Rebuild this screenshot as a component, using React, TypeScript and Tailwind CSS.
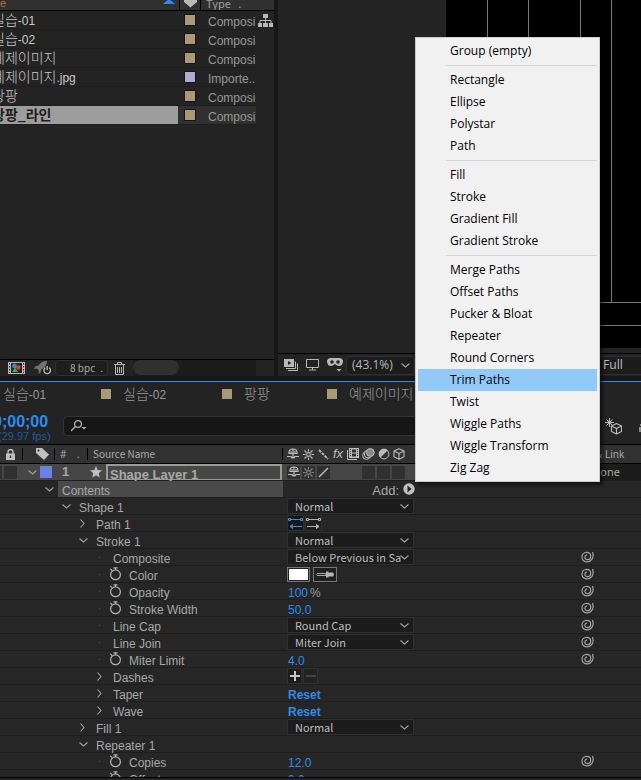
import React from "react";

const TAN = "bg-[#ab9877]";

const project = [
  { name: "실습", suffix: "-01", type: "Composi", tag: TAN },
  { name: "실습", suffix: "-02", type: "Composi", tag: TAN },
  { name: "예제이미지", suffix: "", type: "Composi", tag: TAN },
  { name: "예제이미지", suffix: ".jpg", type: "Importe..", tag: "bg-[#aeaad0]" },
  { name: "팡팡", suffix: "", type: "Composi", tag: TAN },
  { name: "팡팡_라인", suffix: "", type: "Composi", tag: TAN, selected: true },
];

const menu = [
  ["Group (empty)"],
  ["Rectangle", "Ellipse", "Polystar", "Path"],
  ["Fill", "Stroke", "Gradient Fill", "Gradient Stroke"],
  [
    "Merge Paths",
    "Offset Paths",
    "Pucker & Bloat",
    "Repeater",
    "Round Corners",
    "Trim Paths",
    "Twist",
    "Wiggle Paths",
    "Wiggle Transform",
    "Zig Zag",
  ],
];

function ItemName({ name, suffix, bold = false }: { name: string; suffix: string; bold?: boolean }) {
  return (
    <span
      className={
        "whitespace-nowrap font-['Noto_Sans_CJK_KR',sans-serif] text-[14px] leading-[18px] " +
        (bold ? "font-bold" : "font-light")
      }
    >
      {name}
      <span className="font-['Liberation_Sans',sans-serif] text-[12px] font-normal">{suffix}</span>
    </span>
  );
}

function Chevron({ open = true }: { open?: boolean }) {
  return (
    <svg width="9" height="9" viewBox="0 0 9 9" fill="none" stroke="#a0a0a0" strokeWidth="1.1" className="shrink-0">
      <path d={open ? "M.5 2.500 4.500 6 8.500 2.500" : "M1.500 .5 5 4.500 1.500 8.500"} />
    </svg>
  );
}

function Stopwatch() {
  return (
    <svg width="14" height="14" viewBox="0 0 14 14" fill="none" stroke="#b4b4b4" strokeWidth="1.2" className="shrink-0">
      <circle cx="6.500" cy="7.800" r="4.900" />
      <path d="M4.500 .8h4M6.500 .8v2M1.300 1.800l1.800 1.800" />
    </svg>
  );
}

function Spiral() {
  return (
    <svg width="14" height="12" viewBox="0 0 14 12" fill="none" stroke="#a4a4a4" strokeWidth="1.2">
      <path d="M11.500 1c1 3 .8 5.600-.8 7.600-1.300 1.600-3 2.400-5 2.300C2.900 10.700 1 8.800 1 6.100 1 3.300 3 1.300 5.500 1.300s4.200 1.700 4.200 4c0 2-1.400 3.300-3.200 3.300S3.700 7.500 3.900 6c.2-1.200 1.100-1.900 2.100-1.800" />
    </svg>
  );
}

function ShyIcon() {
  return (
    <svg width="12" height="12" viewBox="0 0 12 12" fill="none" stroke="#bdbdbd" strokeWidth="1.2">
      <path d="M2 6V4.500C2 2.300 3.700 1 6 1s4 1.300 4 3.500V6M0 8.500h4c.6 2 3.400 2 4 0h4M2 5.500h8M6 1v9M4 3v2.500M8 3v2.500" />
    </svg>
  );
}

function SunIcon({ dim = false }: { dim?: boolean }) {
  return (
    <svg width="11" height="11" viewBox="0 0 11 11" fill="none" stroke={dim ? "#858585" : "#bdbdbd"} strokeWidth="1.1">
      <circle cx="5.500" cy="5.500" r="1.900" />
      <path d="M5.500 0v2.500M5.500 8.500V11M0 5.500h2.500M8.500 5.500H11M1.500 1.500l2 2M7.500 7.500l2 2M9.500 1.500l-2 2M3.500 7.500l-2 2" />
    </svg>
  );
}

function CubeIcon() {
  return (
    <svg width="12" height="12" viewBox="0 0 12 12" fill="none" stroke="#b8b8b8" strokeWidth="1.1" strokeLinejoin="round">
      <path d="M6 .7 11 3v5.800L6 11.300 1 8.800V3zM1 3l5 2.500L11 3M6 5.500v5.800" />
    </svg>
  );
}

function Select({ label, value }: { label: string; value: string }) {
  return (
    <span className="relative flex h-4 w-[127px] items-center border border-[#303030] bg-[#1c1c1c]">
      <select
        aria-label={label}
        className="h-full w-[116px] appearance-none overflow-hidden bg-transparent pl-[7px] font-['Noto_Sans_CJK_KR',sans-serif] text-[11px] leading-[14px] text-[#bcbcbc]"
      >
        <option>{value}</option>
      </select>
      <span className="pointer-events-none absolute right-1 top-[3px]">
        <Chevron />
      </span>
    </span>
  );
}

function Value({ children, unit, bold = false }: { children: string; unit?: string; bold?: boolean }) {
  return (
    <button className={"pl-px pt-1 text-[12px] leading-[13px] text-[#2d8ceb] " + (bold ? "font-bold" : "")}>
      {children}
      {unit && <span className="pl-0.5 text-[#999]">{unit}</span>}
    </button>
  );
}

function Swatch() {
  return (
    <span className="flex gap-[3px]">
      <button aria-label="Stroke color" className="h-[15px] w-[23px] border border-[#777] bg-white p-px ring-1 ring-inset ring-[#222]" />
      <button aria-label="Pick color" className="flex h-[15px] w-6 items-center justify-center border border-[#777] bg-[#1f1f1f]">
        <svg width="18" height="7" viewBox="0 0 18 7">
          <path d="M1 2.500h9v2H1L0 3.500z" fill="none" stroke="#aaa" />
          <path d="M10 .5h2.500v1H17l1 2-1 2h-4.500v1H10z" fill="#b4b4b4" />
        </svg>
      </button>
    </span>
  );
}

function PathDirection() {
  return (
    <span className="flex gap-px">
      {[true, false].map((active) => (
        <button
          key={String(active)}
          aria-label={active ? "Reverse path direction off" : "Reverse path direction on"}
          className={"flex h-4 w-[17px] items-center justify-center border border-[#303030] " + (active ? "bg-[#161616]" : "bg-[#1e1e1e]")}
        >
          <svg width="15" height="12" viewBox="0 0 15 12" fill="none" stroke={active ? "#2d8ceb" : "#b4b4b4"} className="shrink-0">
            <path d="M.5 1.500h2v2h-2zM12.500 1.500h2v2h-2zM3 2.500h9" />
            {active ? (
              <path d="M14 9.500H3M4.500 7.500v4L2 9.500z" fill="#2d8ceb" />
            ) : (
              <path d="M1 9.500h11M10.500 7.500v4L13 9.500z" fill="#b4b4b4" />
            )}
          </svg>
        </button>
      ))}
    </span>
  );
}

function DashButtons() {
  return (
    <span className="flex gap-px">
      <button aria-label="Add dash" className="flex h-4 w-[15px] items-center justify-center border border-[#303030] bg-[#1c1c1c]">
        <svg width="10" height="10" viewBox="0 0 10 10" stroke="#c8c8c8" strokeWidth="2">
          <path d="M0 5h10M5 0v10" />
        </svg>
      </button>
      <button aria-label="Remove dash" className="flex h-4 w-[15px] items-center justify-center border border-[#303030] bg-[#222]">
        <svg width="10" height="10" viewBox="0 0 10 10" stroke="#444" strokeWidth="2">
          <path d="M0 5h10" />
        </svg>
      </button>
    </span>
  );
}

type Row = {
  label: string;
  pad: string;
  arrow?: "open" | "closed";
  watch?: boolean;
  dot?: boolean;
  link?: boolean;
  control?: React.ReactNode;
};

const reset = <Value bold>Reset</Value>;

const rows: Row[] = [
  { label: "Shape 1", pad: "pl-[62px]", arrow: "open", control: <Select label="Shape 1 blend mode" value="Normal" /> },
  { label: "Path 1", pad: "pl-[79px]", arrow: "closed", control: <PathDirection /> },
  { label: "Stroke 1", pad: "pl-[79px]", arrow: "open", control: <Select label="Stroke 1 blend mode" value="Normal" /> },
  { label: "Composite", pad: "pl-[96px]", dot: true, link: true, control: <Select label="Composite" value="Below Previous in Sa" /> },
  { label: "Color", pad: "pl-[96px]", dot: true, watch: true, link: true, control: <Swatch /> },
  { label: "Opacity", pad: "pl-[96px]", dot: true, watch: true, link: true, control: <Value unit="%">100</Value> },
  { label: "Stroke Width", pad: "pl-[96px]", dot: true, watch: true, link: true, control: <Value>50.0</Value> },
  { label: "Line Cap", pad: "pl-[96px]", dot: true, link: true, control: <Select label="Line Cap" value="Round Cap" /> },
  { label: "Line Join", pad: "pl-[96px]", dot: true, link: true, control: <Select label="Line Join" value="Miter Join" /> },
  { label: "Miter Limit", pad: "pl-[96px]", dot: true, watch: true, link: true, control: <Value>4.0</Value> },
  { label: "Dashes", pad: "pl-[96px]", arrow: "closed", control: <DashButtons /> },
  { label: "Taper", pad: "pl-[96px]", arrow: "closed", control: reset },
  { label: "Wave", pad: "pl-[96px]", arrow: "closed", control: reset },
  { label: "Fill 1", pad: "pl-[79px]", arrow: "closed", control: <Select label="Fill 1 blend mode" value="Normal" /> },
  { label: "Repeater 1", pad: "pl-[79px]", arrow: "open" },
  { label: "Copies", pad: "pl-[96px]", dot: true, watch: true, link: true, control: <Value>12.0</Value> },
  { label: "Offset", pad: "pl-[96px]", dot: true, watch: true, control: <Value>0.0</Value> },
];

function PropertyRow({ row }: { row: Row }) {
  return (
    <div className="flex h-[17px] shrink-0 items-center border-b border-[#1e1e1e]">
      <div className={"flex w-[287px] shrink-0 items-center " + row.pad}>
        <span className="flex w-[17px] shrink-0 items-center">
          {row.arrow && <Chevron open={row.arrow === "open"} />}
          {row.dot && <span className="ml-[3px] size-px bg-[#555]" />}
        </span>
        {row.watch && (
          <button aria-label={"Animate " + row.label} className="-ml-1 w-5">
            <Stopwatch />
          </button>
        )}
        <span className="pt-1 text-[12px] leading-[13px]">{row.label}</span>
      </div>
      {row.control}
      {row.link && (
        <button aria-label={"Pick whip for " + row.label} className="ml-auto mr-[46px]">
          <Spiral />
        </button>
      )}
    </div>
  );
}

function ProjectPanel() {
  return (
    <section className="flex w-[274px] shrink-0 flex-col bg-[#232323]">
      <div className="flex h-[11px] shrink-0 items-end overflow-hidden border-b border-black bg-[#303030] text-[11px]">
        <span className="w-[162px] shrink-0 text-[#a8763e]">
          <span className="block leading-[13px]">e</span>
        </span>
        <svg width="14" height="10" viewBox="0 0 14 10" className="shrink-0">
          <path d="M1 4 7-1l6 5z" fill="#2d8ceb" />
        </svg>
        <span className="ml-[3px] h-full w-px bg-black" />
        <svg width="20" height="10" viewBox="0 0 20 10" className="shrink-0">
          <path d="M4-1h13v3l-6.500 5.500L4 2z" fill="#bababa" />
        </svg>
        <span className="h-full w-px bg-black" />
        <span className="pl-[5px] font-['Noto_Sans_CJK_KR',sans-serif] leading-[14px] text-[#a0a0a0]">Type&nbsp;&nbsp;&nbsp;.</span>
      </div>
      <div className="flex flex-1">
        <ul className="w-64 shrink-0">
          {project.map((p) => (
            <li key={p.name + p.suffix} className="flex h-[19px] border-b border-[#1e1e1e]">
              <span
                className={
                  "flex w-[178px] shrink-0 items-center overflow-hidden " +
                  (p.selected ? "bg-[#9d9d9d] text-[#1c1c1c]" : "text-[#c8c8c8]")
                }
              >
                <span className="-ml-2">
                  <ItemName name={p.name} suffix={p.suffix} bold={p.selected} />
                </span>
              </span>
              <span className={"flex flex-1 items-center overflow-hidden " + (p.selected ? "bg-[#303030]" : "")}>
                <span className={"ml-[7px] size-[10px] shrink-0 ring-1 ring-[#151515] " + p.tag} />
                <span className="ml-[13px] pt-[5px] text-[12px] leading-[13px] text-[#989898]">{p.type}</span>
              </span>
            </li>
          ))}
        </ul>
        <svg width="15" height="14" viewBox="0 0 15 14" fill="#b8b8b8" className="ml-0.5 mt-[3px]">
          <path d="M5 0h5v4H5zM0 9h4v4H0zM5 9h5v4H5zM11 9h4v4h-4z" />
          <path d="M7.500 4v5M2 9V6.500h11V9" fill="none" stroke="#b8b8b8" />
        </svg>
      </div>
      <div className="flex h-[17px] items-center border-t border-black">
        <button aria-label="Interpret footage" className="ml-2">
          <svg width="17" height="12" viewBox="0 0 17 12">
            <path d="M0 0h17v12H0z" fill="#b8b8b8" />
            <path d="M3 1h11v10H3z" fill="#222" />
            <path d="M1.500 1v10M15.500 1v10" stroke="#222" strokeDasharray="1.500 1.500" />
            <circle cx="6.500" cy="4" r="2.400" fill="#2d8ceb" />
            <path d="M8.500 3.500h4v4h-4z" fill="#e23a31" />
            <path d="m7 5.500 3 4.500H4z" fill="#3bb54a" />
          </svg>
        </button>
        <button aria-label="Project settings" className="ml-[9px]">
          <svg width="18" height="14" viewBox="0 0 18 14">
            <path d="M13 0c-4 0-7 2-8.500 4.500L1 5.500 0 8l3-.5L5 10l-.5 3 2-1.500.8-3C10.500 7 13 4 13 0z" fill="#727272" />
            <path d="M11.200 6.800a3.300 3.300 0 1 0 4 0M13.200 5v4" fill="none" stroke="#c0c0c0" strokeWidth="1.300" />
          </svg>
        </button>
        <button className="ml-[3px] flex h-4 w-[53px] shrink-0 items-center justify-between rounded-sm border border-[#303030] bg-[#1e1e1e] pl-3.5 pr-1 font-['Noto_Sans_CJK_KR',sans-serif] text-[10px] leading-[14px] text-[#aaa]">
          <span>8 bpc</span>
          <span>.</span>
        </button>
        <button aria-label="Delete" className="ml-1.5 mr-2">
          <svg width="11" height="13" viewBox="0 0 11 13" fill="none" stroke="#b8b8b8">
            <path d="M0 2.500h11M3.500 2V.5h4V2M1.500 3v9.500h8V3M3.500 5v6M5.500 5v6M7.500 5v6" />
          </svg>
        </button>
        <span className="flex h-4 w-[123px] bg-[#1c1c1c]">
          <span className="h-[15px] w-[46px] rounded-full bg-[#303030]" />
        </span>
      </div>
    </section>
  );
}

function Viewer() {
  return (
    <section className="flex min-w-0 flex-1 flex-col bg-[#232323]">
      <div className="ml-[168px] min-h-0 flex-1 overflow-hidden bg-black">
        <svg width="100%" height="348" className="block" stroke="#777">
          <path d="M41.500 0v302M82.500 0v302M134.500 0v302M165.500 0v302" />
          <path d="M0 302.500h400M0 325.500h400" />
        </svg>
      </div>
      <div className="flex h-7 shrink-0 items-center pt-[5px] font-['Noto_Sans',sans-serif] text-[12px] text-[#b8b8b8]">
        <div className="flex h-full flex-1 items-center border-t border-black">
          <button aria-label="Always preview" className="ml-1.5">
            <svg width="14" height="12" viewBox="0 0 14 12">
              <path d="M0 0h10v8H0z" fill="#b8b8b8" />
              <path d="m4 2 3.500 2L4 6z" fill="#222" />
              <path d="M11.500 2.500v7H2M13.500 4.500v7H4" fill="none" stroke="#b8b8b8" />
            </svg>
          </button>
          <button aria-label="Primary viewer" className="ml-2">
            <svg width="13" height="12" viewBox="0 0 13 12" fill="none" stroke="#b8b8b8">
              <path d="M.5.500h12v8H.5zM6.500 8.500v2.500M3 11h7" />
            </svg>
          </button>
          <button aria-label="VR view" className="ml-2">
            <svg width="16" height="14" viewBox="0 0 16 14" fill="#b8b8b8">
              <path fillRule="evenodd" d="M0 2.500Q1 0 3 0h10q2 0 3 2.500v1q-.5 4.500-4 4.500-2 0-4-2-2 2-4 2Q.5 8 0 3.500zM5 2.200a1.800 1.800 0 1 0 0 3.600 1.800 1.800 0 0 0 0-3.600zm6 0a1.800 1.800 0 1 0 0 3.600 1.800 1.800 0 0 0 0-3.600zM9.500 11h5L12 13.500z" />
            </svg>
          </button>
          <button className="ml-[3px] flex h-[19px] w-[69px] items-center justify-between rounded-sm border border-[#303030] bg-[#1c1c1c] pl-[5px] pr-1 font-['Open_Sans',sans-serif] leading-4">
            (43.1%) <Chevron />
          </button>
          <button className="ml-auto flex h-[19px] w-11 items-center border-y border-[#303030] bg-[#1c1c1c] pl-1.5 leading-4">
            Full
          </button>
        </div>
      </div>
    </section>
  );
}

function ContextMenu() {
  return (
    <div
      role="menu"
      className="absolute left-[415px] top-[37px] w-[185px] border border-[#ccc] bg-[#f1f1f1] px-0.5 py-0.5 font-['Open_Sans',sans-serif] text-[12px] text-black shadow-[3px_3px_3px_rgba(0,0,0,0.5)]"
    >
      {menu.map((group, i) => (
        <div key={group[0]} role="group">
          {i > 0 && <div className="my-[3px] ml-7 h-px bg-[#d6d6d6]" />}
          {group.map((item) => (
            <button
              key={item}
              role="menuitem"
              className={"block h-[22px] w-full pl-8 text-left leading-[22px] " + (item === "Trim Paths" ? "bg-[#91c9f7]" : "")}
            >
              {item}
            </button>
          ))}
        </div>
      ))}
    </div>
  );
}

function Tab({ name, suffix = "", width, swatch = true }: { name: string; suffix?: string; width: string; swatch?: boolean }) {
  return (
    <button className={"flex shrink-0 items-center text-left text-[#989898] " + width}>
      {swatch && <span className="mr-3 size-[10px] shrink-0 bg-[#ab9877]" />}
      <ItemName name={name} suffix={suffix} />
    </button>
  );
}

function Timeline() {
  return (
    <section className="flex h-[396px] shrink-0 flex-col overflow-hidden border-t border-[#2d8ceb] bg-[#262626] text-[#a8a8a8]">
      <nav className="flex h-[27px] shrink-0 bg-[#232323] pb-1 pl-[3px]">
        <Tab name="실습" suffix="-01" width="w-[98px]" swatch={false} />
        <Tab name="실습" suffix="-02" width="w-[121px]" />
        <Tab name="팡팡" width="w-[105px]" />
        <Tab name="예제이미지" width="w-[110px]" />
      </nav>
      <div className="flex h-[35px] shrink-0 bg-[#232323]">
        <div className="flex w-[63px] shrink-0 flex-col items-start whitespace-nowrap pt-1 text-[#2d8ceb]">
          <button className="-ml-[7px] text-[16px] font-bold leading-[17px]">0;00;00</button>
          <span className="-ml-0.5 text-[11px] leading-3 text-[#1d5a9a]">(29.97 fps)</span>
        </div>
        <label className="mt-[7px] flex h-5 w-[400px] items-center rounded-sm border border-[#333] bg-[#161616] pl-[7px]">
          <svg width="16" height="12" viewBox="0 0 16 12" fill="none" stroke="#b0b0b0" strokeWidth="1.300">
            <circle cx="7" cy="4" r="3.400" />
            <path d="M4.500 6.500 0 11" />
            <path d="M10.500 7h5L13 9.500z" fill="#b0b0b0" stroke="none" />
          </svg>
          <input aria-label="Search layers" className="min-w-0 flex-1 bg-transparent outline-none" />
        </label>
        <div className="ml-auto flex items-start gap-[17px] pt-[9px]">
          <svg width="17" height="17" viewBox="0 0 17 17" fill="none" stroke="#b8b8b8" strokeLinejoin="round">
            <path d="M4.500 0v9M0 4.500h9M1.500 1.500l6 6M7.500 1.500l-6 6" />
            <circle cx="4.500" cy="4.500" r="2" fill="#b8b8b8" stroke="none" />
            <path d="M11.500 5.500 16.500 8v5.500l-5 2.500-5-2.500V8zM6.500 8l5 2.500 5-2.500M11.500 10.500V16" strokeWidth="1.200" />
          </svg>
          <svg width="2" height="14" viewBox="0 0 2 14" fill="#888">
            <path d="M1 6h1v2H1zM0 9h2v5H0z" />
          </svg>
        </div>
      </div>
      <div className="flex h-[19px] shrink-0 items-center border-t border-black bg-[#323232] font-['Noto_Sans',sans-serif] text-[10px]">
        <svg width="9" height="11" viewBox="0 0 9 11" className="ml-1.5 shrink-0">
          <path d="M0 4.500h9V11H0z" fill="#c0c0c0" />
          <path d="M2 5V3a2.500 2.500 0 0 1 5 0v2" fill="none" stroke="#c0c0c0" strokeWidth="1.400" />
          <path d="M4.500 6.500v2.500" stroke="#333" strokeWidth="1.400" />
        </svg>
        <span className="ml-[7px] h-3 w-px bg-black" />
        <svg width="13" height="12" viewBox="0 0 13 12" className="ml-[13px] shrink-0">
          <path d="M0 0h6l7 6.500-5 5.500L0 5z" fill="#c0c0c0" />
          <circle cx="2.500" cy="2.500" r="1" fill="#333" />
        </svg>
        <span className="ml-[5px] h-3 w-px bg-black" />
        <span className="w-8 pl-[5px]">#&nbsp;&nbsp;&nbsp;&nbsp;.</span>
        <span className="h-3 w-px bg-black" />
        <span className="w-[194px] shrink-0 pl-[5px] font-['Noto_Sans_CJK_KR',sans-serif] leading-4">Source Name</span>
        <span className="h-3 w-px bg-black" />
        <div className="ml-1 flex shrink-0 items-center gap-[3px]">
          <ShyIcon />
          <span className="ml-px"><SunIcon /></span>
          <svg width="11" height="11" viewBox="0 0 11 11" stroke="#bdbdbd" strokeWidth="1.800" strokeDasharray="3 1" className="ml-px">
            <path d="m1 1 9 9" />
          </svg>
          <span className="w-3 text-center font-['Liberation_Sans',sans-serif] text-[13px] italic leading-3 text-[#bdbdbd]">fx</span>
          <svg width="12" height="12" viewBox="0 0 12 12">
            <path d="M2 0h10v10H2z" fill="#bdbdbd" />
            <path d="M5 1.500h4v3H5zM5 5.500h4v3H5z" fill="#333" />
            <path d="M3.500 1v8M10.500 1v8" stroke="#333" strokeDasharray="1 1" />
            <path d="M.5 2v9.500H10" stroke="#bdbdbd" fill="none" />
          </svg>
          <svg width="13" height="12" viewBox="0 0 13 12" stroke="#bdbdbd">
            <circle cx="4.500" cy="7.500" r="3.900" fill="#333" />
            <circle cx="6.200" cy="6" r="3.900" fill="#333" />
            <circle cx="8.300" cy="4.500" r="3.900" fill="#8a8a8a" />
          </svg>
          <svg width="12" height="12" viewBox="0 0 12 12">
            <circle cx="6" cy="6" r="4.900" fill="none" stroke="#bdbdbd" />
            <path d="M9.600 2.400A5 5 0 0 0 2.400 9.600z" fill="#bdbdbd" />
          </svg>
          <CubeIcon />
        </div>
        <span className="ml-auto w-[46px] shrink-0 whitespace-nowrap">&amp; Link</span>
      </div>
      <div className="flex h-[18px] shrink-0 items-center border-y border-b-[#1e1e1e] border-t-black bg-[#464646]">
        <span className="h-[13px] w-0.5 bg-[#303030]" />
        <span className="ml-0.5 h-[13px] w-[13px] bg-[#303030]" />
        <button aria-label="Collapse layer" className="ml-[11px]">
          <Chevron />
        </button>
        <span className="ml-[3px] size-3 bg-[#6b80e0]" />
        <span className="w-[38px] shrink-0 pl-2.5 text-[13px] font-bold leading-4">1</span>
        <svg width="12" height="12" viewBox="0 0 12 12" className="shrink-0">
          <path d="m6 0 1.700 4 4.300.4-3.300 2.800 1 4.300L6 9.200l-3.700 2.300 1-4.300L0 4.400 4.300 4z" fill="#c0c0c0" />
        </svg>
        <span className="ml-1 flex h-4 w-[176px] shrink-0 items-center border-2 border-b border-[#989b96] bg-[#474747] pl-0.5 pt-1 text-[13px] font-bold leading-[13px]">
          Shape Layer 1
        </span>
        <div className="ml-[5px] flex gap-0.5">
          <span className="flex size-[13px] items-center justify-center bg-[#303030]"><ShyIcon /></span>
          <span className="flex size-[13px] items-center justify-center bg-[#303030]"><SunIcon dim /></span>
          <span className="flex size-[13px] items-center justify-center bg-[#303030]">
            <svg width="11" height="11" viewBox="0 0 11 11" stroke="#bdbdbd" strokeWidth="1.400"><path d="M1 10 10 1" /></svg>
          </span>
          <span className="size-[13px]" />
          <span className="size-[13px]" />
          <span className="size-[13px] bg-[#303030]" />
          <span className="size-[13px] bg-[#303030]" />
          <span className="size-[13px] bg-[#303030]" />
        </div>
        <button className="ml-auto h-full w-[49px] bg-[#1c1c1c] text-left font-['Noto_Sans',sans-serif] text-[11px] leading-4">None</button>
      </div>
      <div className="flex h-[17px] shrink-0 items-center border-b border-[#1e1e1e]">
        <div className="flex w-[58px] shrink-0 items-center pl-[45px]">
          <Chevron />
        </div>
        <span className="h-full w-[225px] bg-[#4a4a4a] pl-1 pt-[3px] text-[12px] leading-[15px]">Contents</span>
        <button className="ml-auto mr-[226px] flex items-center gap-1 text-[13px] leading-[15px]">
          <span className="pt-0.5">Add:</span>
          <svg width="12" height="12" viewBox="0 0 12 12">
            <circle cx="6" cy="6" r="5.700" fill="#c0c0c0" />
            <path d="m4.500 2.500 4 3.500-4 3.500z" fill="#222" />
          </svg>
        </button>
      </div>
      {rows.map((row) => (
        <PropertyRow key={row.label} row={row} />
      ))}
    </section>
  );
}

export default function App() {
  return (
    <main className="relative flex h-screen flex-col overflow-hidden bg-[#161616] font-['Liberation_Sans',sans-serif]">
      <div className="flex min-h-0 flex-1 gap-1 pb-[5px]">
        <ProjectPanel />
        <Viewer />
      </div>
      <Timeline />
      <div className="h-[3px] shrink-0 border-t border-black bg-[#232323]" />
      <ContextMenu />
    </main>
  );
}
